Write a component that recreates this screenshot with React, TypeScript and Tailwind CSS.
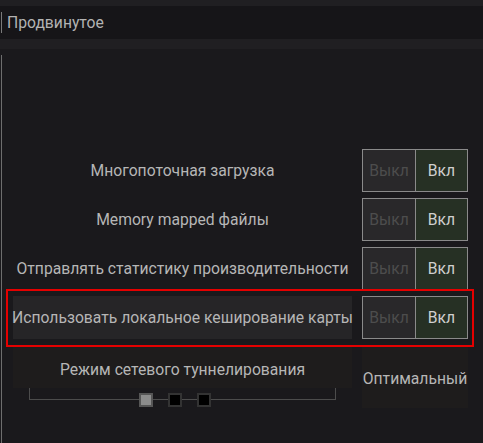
import React from 'react';

const rows = [
    'Многопоточная загрузка',
    'Memory mapped файлы',
    'Отправлять статистику производительности',
    'Использовать локальное кеширование карты',
];

function Toggle() {
    return (
        <div className="flex h-[43px] w-[106px] shrink-0 border border-[#8a8a8a]">
            <div className="flex w-[52px] items-center justify-center bg-[#29282a] text-[#4d4d4d]">Выкл</div>
            <div className="w-px bg-[#8a8a8a]" />
            <div className="flex flex-1 items-center justify-center bg-[#263024] text-[#cfcfcf]">Вкл</div>
        </div>
    );
}

export default function App() {
    return (
        <div
            className="relative h-[443px] w-[483px] overflow-hidden bg-[#1a191c] text-[15.7px] text-[#b6b6b6]"
            style={{ fontFamily: 'Roboto, "Noto Sans", sans-serif' }}
        >
            {/* Header */}
            <div className="h-[6px] bg-[#201f22]" />
            <div className="flex h-[33px] items-center bg-[#161518]">
                <div className="ml-px h-[21px] w-px bg-[#7a7a7a]" />
                <span className="ml-[5px] text-[#b3b3b3]">Продвинутое</span>
            </div>
            <div className="h-[10px] bg-[#201f22]" />

            {/* Body */}
            <div className="flex h-[394px]">
                <div className="ml-px mt-[6px] w-px bg-[#6e6e6e]" />
                <div className="flex flex-1 flex-col gap-[6px] pl-[11px] pt-[100px]">
                    {rows.map((label, i) => (
                        <div key={label} className="flex h-[43px] gap-[10px]">
                            <div
                                className={
                                    'flex w-[339px] items-center justify-center whitespace-nowrap ' +
                                    (i === 3 ? 'bg-[#262527]' : '')
                                }
                            >
                                {label}
                            </div>
                            <Toggle />
                        </div>
                    ))}

                    {/* Network tunneling */}
                    <div className="mt-[2px] flex gap-[10px]">
                        <div className="w-[339px]">
                            <div className="flex h-[41px] items-center justify-center bg-[#1e1c1c] pt-[4px]">
                                Режим сетевого туннелирования
                            </div>
                            <div className="ml-[16px] h-[12px] w-[307px] border-x border-b border-[#4c4c4c]" />
                            <div className="-mt-[7px] ml-[126px] flex gap-[15px]">
                                <div className="h-[14px] w-[14px] border-2 border-[#565656] bg-[#8c8c8c]" />
                                <div className="h-[14px] w-[14px] border-2 border-[#333] bg-black" />
                                <div className="h-[14px] w-[14px] border-2 border-[#333] bg-black" />
                            </div>
                        </div>
                        <div className="flex h-[61px] w-[106px] items-center justify-center whitespace-nowrap bg-[#1e1c1c] pt-[2px]">
                            Оптимальный
                        </div>
                    </div>
                </div>
            </div>

            {/* Highlight overlay */}
            <div className="pointer-events-none absolute left-[6px] top-[289px] h-[58px] w-[468px] border-2 border-[#e50000]" />
        </div>
    );
}
